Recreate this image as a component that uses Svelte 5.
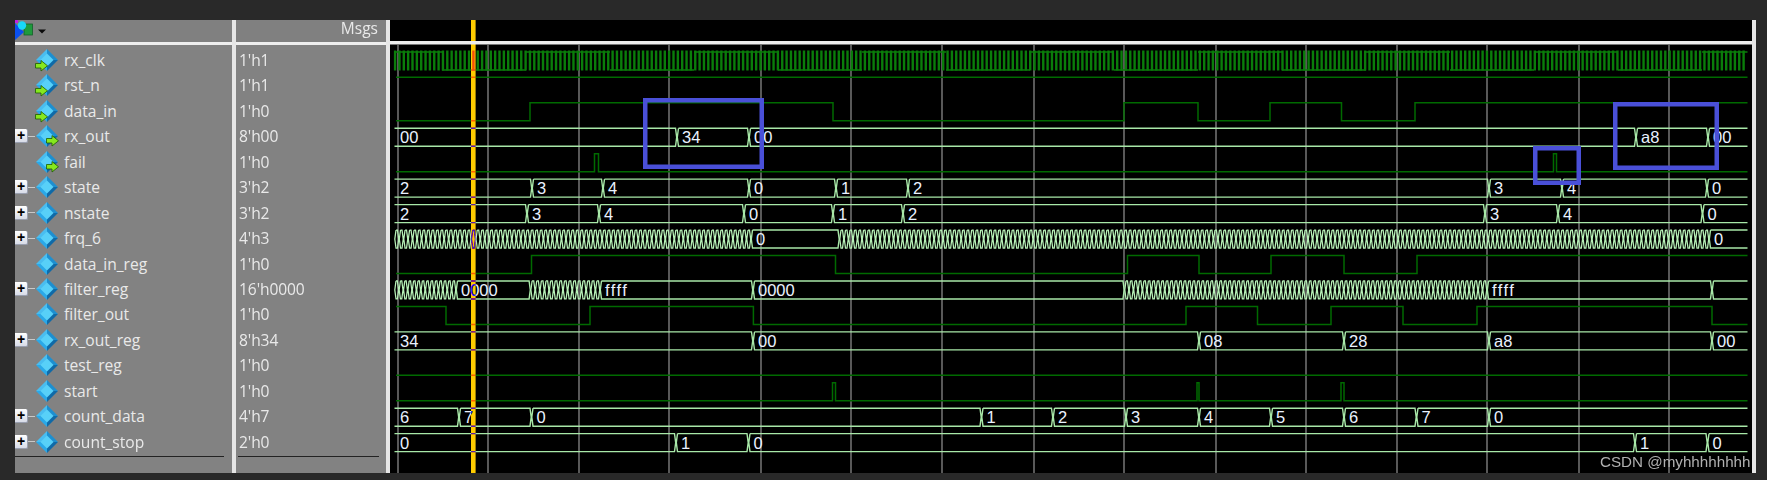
<script>
  const X0 = 394.5, X1 = 1747.5, P = 4.5;
  const top = (i) => 51.9 + 25.45 * i;
  const H = 18;

  // bit: [startLevel, edges...]; bus: [[x, label, hatched]...]
  const signals = [
    { name: 'rx_clk', val: "1'h1", arrow: 'in', clk: true },
    { name: 'rst_n', val: "1'h1", arrow: 'in', bit: [1] },
    { name: 'data_in', val: "1'h0", arrow: 'in', bit: [0, 530, 833, 1124, 1198, 1270, 1341.5, 1415] },
    { name: 'rx_out', val: "8'h00", arrow: 'out', plus: true, bus: [[X0, '00'], [677, '34'], [749, '00'], [1636, 'a8'], [1708, '00']] },
    { name: 'fail', val: "1'h0", arrow: 'out', bit: [0, 594.5, 598.5, 1553.5, 1556.5] },
    { name: 'state', val: "3'h2", plus: true, bus: [[X0, '2'], [532, '3'], [603, '4'], [749, '0'], [836, '1'], [908, '2'], [1489, '3'], [1562, '4'], [1707, '0']] },
    { name: 'nstate', val: "3'h2", plus: true, bus: [[X0, '2'], [527, '3'], [599, '4'], [744, '0'], [833, '1'], [903, '2'], [1485, '3'], [1558, '4'], [1702.5, '0']] },
    { name: 'frq_6', val: "4'h3", plus: true, bus: [[X0, '', true], [751, '0'], [839.5, '', true], [1709, '0']] },
    { name: 'data_in_reg', val: "1'h0", bit: [0, 531.5, 835.5, 1127.5, 1199, 1271, 1344, 1417] },
    { name: 'filter_reg', val: "16'h0000", plus: true, bus: [[X0, '', true], [456, '0000'], [530.6, '', true], [600, 'ffff'], [753, '0000'], [1124.5, '', true], [1487, 'ffff'], [1712, '']] },
    { name: 'filter_out', val: "1'h0", bit: [1, 446, 590, 753.4, 1186, 1257.5, 1331, 1403, 1477, 1712] },
    { name: 'rx_out_reg', val: "8'h34", plus: true, bus: [[X0, '34'], [753, '00'], [1199, '08'], [1344, '28'], [1489, 'a8'], [1712, '00']] },
    { name: 'test_reg', val: "1'h0", bit: [0] },
    { name: 'start', val: "1'h0", bit: [0, 832.5, 835.5, 1197, 1199, 1341, 1344] },
    { name: 'count_data', val: "4'h7", plus: true, bus: [[X0, '6'], [459, '7'], [531.5, '0'], [981.5, '1'], [1053, '2'], [1126, '3'], [1199, '4'], [1271, '5'], [1344, '6'], [1416.5, '7'], [1489, '0']] },
    { name: 'count_stop', val: "2'h0", plus: true, bus: [[X0, '0'], [676, '1'], [748.5, '0'], [1635, '1'], [1707.5, '0']] }
  ];

  const gridXs = [398, 488, 579, 669, 761, 851, 942, 1034, 1124, 1216, 1306, 1397, 1487, 1579, 1669];

  function busCell(a, b, t, first, last) {
    const m = t + H / 2, B = t + H;
    const l = first ? a : a + 1.5, r = last ? b : b - 1.5;
    let d = `M${l} ${t}H${r}`;
    if (!last) d += `L${b - 0.3} ${m}L${r} ${B}`;
    else d += `M${r} ${B}`;
    d += `H${l}`;
    if (!first) d += `L${a + 0.3} ${m}L${l} ${t}`;
    return d;
  }

  function solidPath(s, i) {
    const t = top(i);
    let d = '';
    s.bus.forEach((seg, k) => {
      if (seg[2]) return;
      const b = k + 1 < s.bus.length ? s.bus[k + 1][0] : X1;
      d += busCell(seg[0], b, t, k === 0, k === s.bus.length - 1);
    });
    return d;
  }

  function hatchPath(s, i) {
    const t = top(i);
    let d = '';
    s.bus.forEach((seg, k) => {
      if (!seg[2]) return;
      const a = seg[0];
      const b = k + 1 < s.bus.length ? s.bus[k + 1][0] : X1;
      const n = Math.max(1, Math.round((b - a) / P));
      const w = (b - a) / n;
      for (let j = 0; j < n; j++) {
        d += busCell(a + j * w, a + (j + 1) * w, t, false, false);
      }
    });
    return d;
  }

  function bitPath(s, i) {
    const hi = top(i), lo = hi + H;
    let level = s.bit[0];
    let d = `M396 ${level ? hi : lo}`;
    for (const x of s.bit.slice(1)) {
      level = level ? 0 : 1;
      d += `H${x}V${level ? hi : lo}`;
    }
    return d + `H${X1}`;
  }

  function clkBars() {
    let d = '';
    for (let x = X0 + 0.6; x < X1 - 1; x += 4.35) d += `M${x.toFixed(2)} 50.5V70.5`;
    return d;
  }

  function clkRails() {
    let d = '';
    let up = true;
    let a = X0;
    let b = 442;
    while (a < X1) {
      d += `M${a} ${up ? 52 : 70}H${Math.min(b, X1)}`;
      a = b;
      b += 84;
      up = !up;
    }
    return d;
  }

  const boxes = [
    { x: 643, y: 98, w: 121, h: 71 },
    { x: 1533, y: 146, w: 48, h: 39 },
    { x: 1613, y: 102, w: 106, h: 68 }
  ];

  const labels = [];
  signals.forEach((s, i) => {
    if (!s.bus) return;
    s.bus.forEach((seg) => {
      if (seg[1]) labels.push({ x: seg[0] === X0 ? 400 : seg[0] + 5, y: top(i) + 15.2, t: seg[1] });
    });
  });
</script>

<div class="window">
  <section class="names">
    <header class="head">
      <svg class="logo" viewBox="0 0 34 20" width="34" height="20" aria-hidden="true">
        <rect x="0" y="0" width="3" height="3" fill="#c020e0" />
        <rect x="9" y="4" width="8.5" height="11" fill="#1f9a3c" stroke="#136028" stroke-width="0.8" />
        <polygon points="0,3 9,12 0,20" fill="#0a50f0" />
        <circle cx="7" cy="5.5" r="4.2" fill="#18d8f8" />
        <polygon points="23,9.5 31,9.5 27,13.5" fill="#0a0a0a" />
      </svg>
    </header>
    <div class="rows">
      {#each signals as s}
        <div class="row">
          <span class="slot">
            {#if s.plus}
              <span class="plus">+</span>
              <span class="stem"></span>
            {/if}
          </span>
          <svg class="icon" viewBox="0 0 24 24" width="24" height="24" aria-hidden="true">
            <polygon points="1,12 12,1 12,12" fill="#49bdf0" />
            <polygon points="12,1 23,12 12,12" fill="#1d8fd0" />
            <polygon points="1,12 12,23 12,12" fill="#2aa8e8" />
            <polygon points="12,23 23,12 12,12" fill="#0f6aa8" />
            <polygon points="5.5,12 12,5.5 18.5,12 12,18.5" fill="#58d0f8" />
            {#if s.arrow === 'in'}
              <polygon points="0.5,15.5 6,15.5 6,12.5 12.5,17.8 6,23 6,20 0.5,20" fill="#86e81e" stroke="#1c5c00" stroke-width="0.8" />
            {:else if s.arrow === 'out'}
              <polygon points="11.5,14.5 17,14.5 17,11.5 23.5,16.8 17,22 17,19 11.5,19" fill="#86e81e" stroke="#1c5c00" stroke-width="0.8" />
            {/if}
          </svg>
          <span class="name">{s.name}</span>
        </div>
      {/each}
      <div class="foot name-foot"></div>
    </div>
  </section>
  <div class="rule"></div>
  <section class="values">
    <header class="head msgs">Msgs</header>
    <div class="rows">
      {#each signals as s}
        <div class="row val">{s.val}</div>
      {/each}
      <div class="foot val-foot"></div>
    </div>
  </section>
  <div class="rule wide"></div>
  <svg class="wave" viewBox="390 20 1362 453" width="1362" height="453">
    <rect x="390" y="20" width="1362" height="453" fill="#000" />
    {#each gridXs as x}
      <line x1={x} x2={x} y1="45" y2="473" class="grid" />
    {/each}

    <path d={clkBars()} class="clk" />
    <path d={clkRails()} class="clk-rail" />

    {#each signals as s, i}
      {#if s.bit}
        <path d={bitPath(s, i)} class="bit" />
      {:else if s.bus}
        <path d={solidPath(s, i)} class="bus" />
        <path d={hatchPath(s, i)} class="hatch" />
      {/if}
    {/each}
    {#each labels as l}
      <text x={l.x} y={l.y} class="label" class:wide={l.t === 'ffff'}>{l.t}</text>
    {/each}

    <rect x="471" y="20" width="4.6" height="453" class="cursor" />
    <rect x="390" y="41" width="1362" height="3.5" fill="#eeeeee" />

    {#each boxes as b}
      <rect x={b.x + 2.25} y={b.y + 2.25} width={b.w - 4.5} height={b.h - 4.5} class="mark" />
    {/each}

    <text x="1600" y="467" class="mark-text">CSDN @myhhhhhhhh</text>
  </svg>
  <div class="edge"></div>
</div>

<style>
  :global(body) {
    margin: 0;
    background: #292929;
  }
  .window {
    display: flex;
    width: 1741px;
    height: 453px;
    margin: 20px 0 0 15px;
    filter: blur(0.35px);
    font-family: "Open Sans", "Liberation Sans", sans-serif;
    color: #e9e9e9;
  }
  .names {
    width: 217px;
    background: #828282;
  }
  .values {
    width: 150.5px;
    background: #828282;
  }
  .rule {
    width: 3.5px;
    background: #e6e6e6;
  }
  .rule.wide {
    width: 4px;
  }
  .edge {
    width: 4px;
    background: #e6e6e6;
  }
  .wave {
    display: block;
    flex: none;
  }
  .head {
    box-sizing: border-box;
    height: 24.5px;
    border-bottom: 3.5px solid #eeeeee;
    background: #808080;
    display: flex;
  }
  .logo {
    display: block;
  }
  .msgs {
    justify-content: flex-end;
    align-items: center;
    padding-right: 8px;
    padding-bottom: 4px;
    font-size: 15.5px;
    line-height: 17px;
  }
  .rows {
    padding-top: 2.8px;
  }
  .row {
    display: flex;
    align-items: center;
    height: 25.45px;
    font-size: 15.6px;
    white-space: nowrap;
  }
  .val {
    padding-left: 3.5px;
    letter-spacing: -0.1px;
  }
  .slot {
    width: 20px;
    height: 14px;
    flex: none;
    display: flex;
    align-items: center;
  }
  .plus {
    width: 13px;
    height: 14px;
    box-sizing: border-box;
    background: linear-gradient(#ffffff, #d8dce8);
    border-right: 1px solid #9aa0b0;
    border-bottom: 1px solid #9aa0b0;
    border-radius: 0 2px 2px 0;
    color: #000;
    font: 700 14px/12px "Liberation Sans", sans-serif;
    text-align: center;
  }
  .stem {
    width: 7px;
    height: 1px;
    background: #c8c8c8;
  }
  .icon {
    flex: none;
  }
  .name {
    margin-left: 5px;
  }
  .foot {
    height: 1.5px;
    background: #222222;
    margin-top: 1.3px;
  }
  .name-foot {
    margin-right: 8px;
  }
  .val-foot {
    margin-left: 2.5px;
    margin-right: 7px;
  }
  .grid {
    stroke: #7f7f7f;
    stroke-width: 1.4;
  }
  .clk {
    stroke: #0a7d0a;
    stroke-width: 2.4;
    fill: none;
  }
  .clk-rail {
    stroke: #0a7d0a;
    stroke-width: 1.4;
    fill: none;
  }
  .bit {
    stroke: #006a00;
    stroke-width: 1.5;
    fill: none;
  }
  .bus {
    stroke: #a8e8a8;
    stroke-width: 1.4;
    fill: none;
  }
  .hatch {
    stroke: #b8f2b8;
    stroke-width: 1.25;
    fill: none;
  }
  .label {
    font: 16.5px "Liberation Sans", sans-serif;
    fill: #eaf2ff;
  }
  .label.wide {
    letter-spacing: 1.5px;
  }
  .cursor {
    fill: #ffcc00;
    mix-blend-mode: difference;
  }
  .mark {
    fill: none;
    stroke: #4a50d8;
    stroke-width: 4.5;
  }
  .mark-text {
    font: 15.2px "Liberation Sans", sans-serif;
    fill: #b0b0b0;
  }
</style>
